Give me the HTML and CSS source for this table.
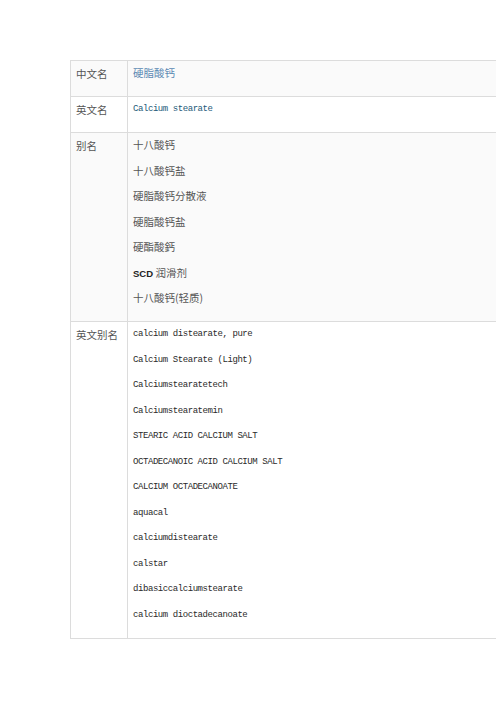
FILE: index.html
```html
<!DOCTYPE html>
<html lang="zh-CN">
<head>
    <meta charset="UTF-8">
    <meta name="viewport" content="width=device-width, initial-scale=1.0">
    <title>硬脂酸钙</title>
    <link rel="stylesheet" href="styles.css">
</head>
<body>
    <div class="page">
        <!-- 基本信息表 -->
        <table class="info-table">
            <tr class="shade">
                <th>中文名</th>
                <td><div class="item link">硬脂酸钙</div></td>
            </tr>
            <tr>
                <th>英文名</th>
                <td><div class="item en teal">Calcium stearate</div></td>
            </tr>
            <tr class="shade">
                <th>别名</th>
                <td>
                    <div class="item">十八酸钙</div>
                    <div class="item">十八酸钙盐</div>
                    <div class="item">硬脂酸钙分散液</div>
                    <div class="item">硬脂酸钙盐</div>
                    <div class="item">硬酯酸鈣</div>
                    <div class="item"><b class="abbr">SCD</b> 润滑剂</div>
                    <div class="item">十八酸钙(轻质)</div>
                </td>
            </tr>
            <tr>
                <th>英文别名</th>
                <td>
                    <div class="item en">calcium distearate, pure</div>
                    <div class="item en">Calcium Stearate (Light)</div>
                    <div class="item en">Calciumstearatetech</div>
                    <div class="item en">Calciumstearatemin</div>
                    <div class="item en">STEARIC ACID CALCIUM SALT</div>
                    <div class="item en">OCTADECANOIC ACID CALCIUM SALT</div>
                    <div class="item en">CALCIUM OCTADECANOATE</div>
                    <div class="item en">aquacal</div>
                    <div class="item en">calciumdistearate</div>
                    <div class="item en">calstar</div>
                    <div class="item en">dibasiccalciumstearate</div>
                    <div class="item en">calcium dioctadecanoate</div>
                </td>
            </tr>
        </table>
    </div>
</body>
</html>
```

FILE: styles.css
```css
/* Estilos globais */
body {
    margin: 0;
    padding: 0;
    background-color: #fff;
    font-family: "Noto Sans CJK SC", sans-serif;
    color: #555;
}

.page {
    width: 100%;
    overflow: hidden;
    padding: 60px 0 0 70px;
    box-sizing: border-box;
}

/* Tabela */
.info-table {
    width: 460px;
    border-collapse: collapse;
    font-size: 10.5px;
}

.info-table th, .info-table td {
    border: 1px solid #dcdcdc;
    vertical-align: top;
    text-align: left;
    padding: 5px 5px 4.5px 5px;
}

.info-table th {
    width: 46px;
    font-weight: normal;
}

.info-table tr {
    background-color: #fff;
}

.info-table tr.shade {
    background-color: #fafafa;
}

.item {
    line-height: 14px;
    height: 14px;
    margin-bottom: 11.5px;
    white-space: nowrap;
}

.item.en {
    font-family: "Liberation Mono", monospace;
    font-size: 9px;
    letter-spacing: -0.43px;
    color: #2a2a2a;
}

.link {
    color: #5b89b3;
}

.item.teal {
    color: #1d5a79;
}

.abbr {
    font-family: "Liberation Sans", sans-serif;
    font-size: 9.5px;
    color: #222;
}
```
